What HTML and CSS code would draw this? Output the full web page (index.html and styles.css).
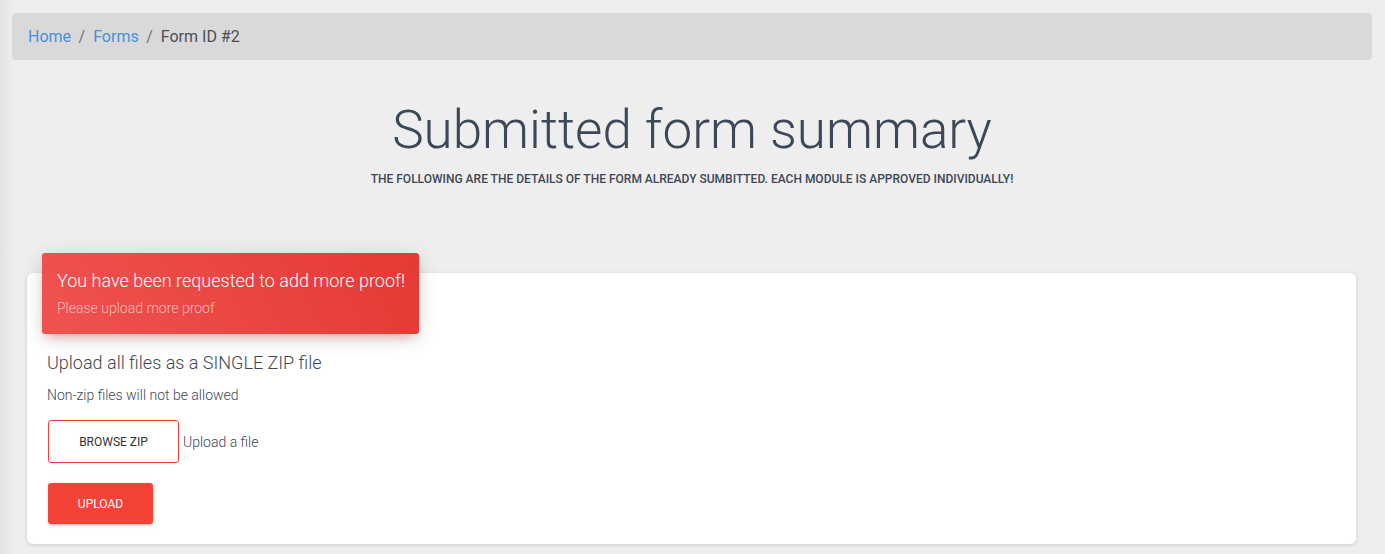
FILE: index.html
```html
<!DOCTYPE html>
<html lang="en">
<head>
<meta charset="utf-8">
<title>Submitted form summary</title>
<link rel="stylesheet" href="styles.css">
</head>
<body>
<div class="page">
  <nav class="breadcrumb">
    <a href="#" class="crumb-link">Home</a>
    <span class="sep">/</span>
    <a href="#" class="crumb-link">Forms</a>
    <span class="sep">/</span>
    <span class="crumb-active">Form ID #2</span>
  </nav>

  <header class="intro">
    <h1 class="title">Submitted form summary</h1>
    <p class="subtitle">The following are the details of the form already sumbitted. Each module is approved individually!</p>
  </header>

  <section class="card">
    <div class="card-header">
      <h4 class="card-title">You have been requested to add more proof!</h4>
      <p class="card-category">Please upload more proof</p>
    </div>
    <div class="card-body">
      <h4 class="upload-title">Upload all files as a SINGLE ZIP file</h4>
      <p class="upload-note">Non-zip files will not be allowed</p>
      <div class="file-row">
        <button class="btn-outline" type="button">Browse zip</button>
        <span class="file-name">Upload a file</span>
      </div>
      <button class="btn-danger" type="button">Upload</button>
    </div>
  </section>
</div>
</body>
</html>
```

FILE: styles.css
```css
html, body {
  margin: 0;
  padding: 0;
}
body {
  background: linear-gradient(90deg, #e3e3e3 0, #eaeaea 8px, #eeeeee 16px);
  font-family: Roboto, "Noto Sans", Arial, sans-serif;
  color: #3c4858;
  min-height: 554px;
  overflow: hidden;
}
.page {
  padding: 13px 13px 0 12px;
}
.breadcrumb {
  display: flex;
  align-items: center;
  height: 47px;
  padding: 0 16px;
  background: #d9d9d9;
  border-radius: 4px;
  font-size: 16px;
  font-weight: 400;
}
.crumb-link {
  color: #4a90d9;
  text-decoration: none;
}
.sep {
  color: #6c757d;
  padding: 0 8px 0 7.5px;
}
.crumb-active {
  color: #4a4f57;
}
.intro {
  text-align: center;
  margin-top: 40px;
}
.title {
  margin: 0;
  font-size: 53px;
  line-height: 61px;
  font-weight: 300;
  color: #3c4858;
}
.subtitle {
  margin: 10px 0 0;
  font-size: 12px;
  line-height: 16px;
  font-weight: 500;
  text-transform: uppercase;
  color: #3c4858;
}
.card {
  margin: 86px 16px 0 15px;
  background: #fff;
  border-radius: 6px;
  box-shadow: 0 1px 4px 0 rgba(0, 0, 0, 0.14);
}
.card-header {
  margin: 0 15px;
  position: relative;
  top: -20px;
  margin-bottom: -20px;
  width: 377px;
  box-sizing: border-box;
  height: 81px;
  padding: 15px 15px 0;
  border-radius: 3px;
  background: linear-gradient(60deg, #ef5350, #e53935);
  box-shadow: 0 4px 20px 0 rgba(0, 0, 0, 0.14), 0 7px 10px -5px rgba(244, 67, 54, 0.4);
  color: #fff;
}
.card-title {
  margin: 0;
  font-size: 18px;
  line-height: 25px;
  font-weight: 300;
  white-space: nowrap;
}
.card-category {
  margin: 5px 0 0;
  font-size: 14px;
  line-height: 20px;
  font-weight: 300;
  color: rgba(255, 255, 255, 0.62);
}
.card-body {
  padding: 16px 20px 20px;
}
.upload-title {
  margin: 0;
  font-size: 18px;
  line-height: 25px;
  font-weight: 300;
  color: #3c4858;
}
.upload-note {
  margin: 10px 0 0;
  font-size: 14px;
  line-height: 20px;
  font-weight: 300;
  color: #3c4858;
}
.file-row {
  display: flex;
  align-items: center;
  gap: 4px;
  margin-top: 15px;
  padding-left: 1px;
}
.btn-outline {
  width: 131px;
  height: 43px;
  background: #fff;
  border: 1px solid #f44336;
  border-radius: 3px;
  font-family: inherit;
  font-size: 12px;
  font-weight: 400;
  text-transform: uppercase;
  color: #333;
  padding: 0;
}
.file-name {
  font-size: 14px;
  font-weight: 300;
  color: #3c4858;
}
.btn-danger {
  display: block;
  margin-top: 20px;
  margin-left: 1px;
  width: 105px;
  height: 41px;
  border: 0;
  border-radius: 3px;
  background: #f44336;
  color: #fff;
  font-family: inherit;
  font-size: 12px;
  font-weight: 400;
  text-transform: uppercase;
  padding: 0;
  box-shadow: 0 2px 2px 0 rgba(244, 67, 54, 0.14), 0 3px 1px -2px rgba(244, 67, 54, 0.2), 0 1px 5px 0 rgba(244, 67, 54, 0.12);
}
```
